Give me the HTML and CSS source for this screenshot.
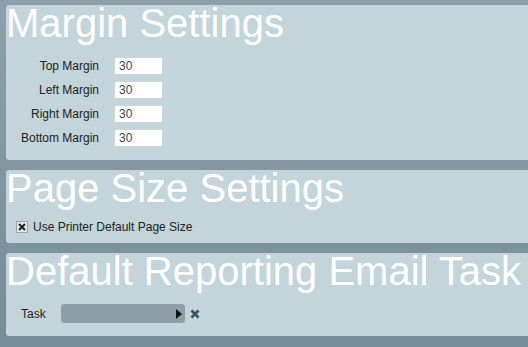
FILE: index.html
```html
<!DOCTYPE html>
<html lang="en">
<head>
  <meta charset="UTF-8">
  <title>Settings</title>
  <link rel="stylesheet" href="styles.css">
</head>
<body>
  <div class="page">

    <div class="panel margins">
      <h1>Margin Settings</h1>
      <div class="field-grid">
        <label for="topMargin">Top Margin</label>
        <input type="text" id="topMargin" value="30">
        <label for="leftMargin">Left Margin</label>
        <input type="text" id="leftMargin" value="30">
        <label for="rightMargin">Right Margin</label>
        <input type="text" id="rightMargin" value="30">
        <label for="bottomMargin">Bottom Margin</label>
        <input type="text" id="bottomMargin" value="30">
      </div>
    </div>

    <div class="panel page-size">
      <h1>Page Size Settings</h1>
      <div class="check-row">
        <span class="check-box">
          <svg width="8" height="8" viewBox="0 0 8 8"><path d="M1 1 L7 7 M7 1 L1 7" stroke="#222" stroke-width="2"/></svg>
        </span>
        <span>Use Printer Default Page Size</span>
      </div>
    </div>

    <div class="panel email-task">
      <h1>Default Reporting Email Task</h1>
      <div class="task-row">
        <span class="task-label">Task</span>
        <div class="task-select">
          <svg class="arrow" width="6" height="10" viewBox="0 0 6 10"><path d="M0 0 L6 5 L0 10 Z" fill="#111"/></svg>
        </div>
        <svg class="clear" width="10" height="10" viewBox="0 0 10 10"><path d="M1.5 1.5 L8.5 8.5 M8.5 1.5 L1.5 8.5" stroke="#35566c" stroke-width="2.6"/></svg>
      </div>
    </div>

  </div>
</body>
</html>
```

FILE: styles.css
```css
body {
  margin: 0;
  padding: 0;
  font-family: "Liberation Sans", Arial, sans-serif;
  background: linear-gradient(to bottom, #8c9fab, #788c97);
  color: #222;
  overflow: hidden;
  height: 347px;
}

.page {
  padding: 5px 0 0 6px;
}

.panel {
  background-color: #c3d4db;
  border-radius: 3px;
  margin-right: -10px;
  margin-bottom: 10px;
}

.panel h1 {
  margin: 0;
  font-size: 40px;
  font-weight: normal;
  line-height: 36px;
  color: #fff;
  white-space: nowrap;
}

/* Margin settings */
.margins {
  height: 155px;
}

.field-grid {
  display: grid;
  grid-template-columns: 93px 49px;
  column-gap: 15px;
  row-gap: 6px;
  padding-top: 16px;
  align-items: center;
  font-size: 12px;
}

.field-grid label {
  text-align: right;
}

.field-grid input {
  box-sizing: border-box;
  width: 49px;
  height: 18px;
  margin: 0;
  padding: 0 4px;
  border: 1px solid #cfd6da;
  border-radius: 2px;
  background-color: #fff;
  font-family: inherit;
  font-size: 12px;
  color: #444;
}

/* Page size */
.page-size {
  height: 73px;
}

.check-row {
  display: flex;
  align-items: center;
  gap: 5px;
  padding: 14px 0 0 10px;
  font-size: 12px;
}

.check-box {
  box-sizing: border-box;
  width: 12px;
  height: 12px;
  border: 1px solid #9aa5ab;
  background-color: #e4e8ea;
  display: flex;
  align-items: center;
  justify-content: center;
}

/* Email task */
.email-task {
  height: 83px;
}

.task-row {
  display: flex;
  align-items: center;
  padding: 15px 0 0 15px;
  font-size: 12px;
}

.task-label {
  width: 40px;
}

.task-select {
  width: 124px;
  height: 19px;
  background-color: #8d9fa9;
  border-radius: 3px;
  display: flex;
  align-items: center;
  justify-content: flex-end;
  padding-right: 3px;
  box-sizing: border-box;
}

.clear {
  margin-left: 5px;
}
```
